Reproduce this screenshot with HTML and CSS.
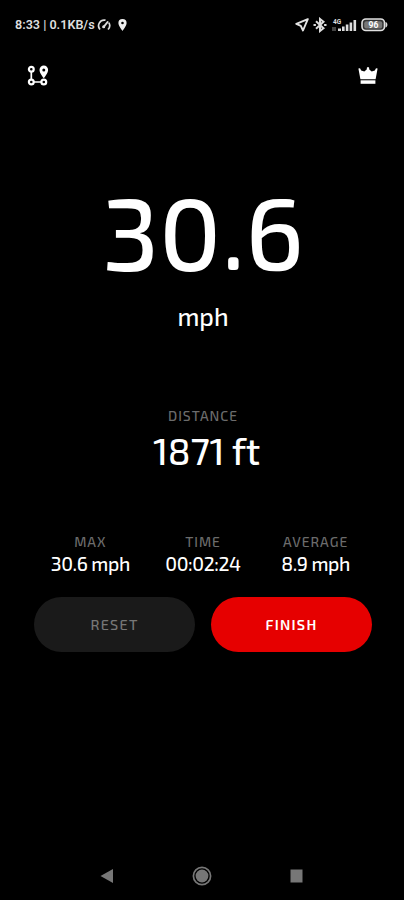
FILE: index.html
```html
<!DOCTYPE html>
<html lang="en">

<head>
  <meta charset="UTF-8">
  <meta name="viewport" content="width=device-width, initial-scale=1.0">
  <title>Speedometer</title>
  <link rel="stylesheet" href="styles.css">
</head>

<body>
  <div class="status-bar">
    <div class="status-left">
      <span class="status-text">8:33 | 0.1KB/s</span>
      <svg class="icon-gauge" width="14" height="12" viewBox="0 0 14 12" fill="none" stroke="#ddd" stroke-width="1.7">
        <path d="M3 10.5A5.7 5.7 0 0 1 8.5 1.2M11.8 3.6A5.7 5.7 0 0 1 11 10.5" />
        <path d="M6.6 8L10.6 3" stroke-width="2" stroke-linecap="round" />
        <circle cx="6.7" cy="7.7" r="1.5" fill="#ddd" stroke="none" />
      </svg>
      <svg class="icon-pin" width="9" height="12" viewBox="0 0 9 12">
        <path fill="#eee" fill-rule="evenodd" d="M4.5 0A4.1 4.1 0 0 0 .4 4.1C.4 7 4.5 12 4.5 12S8.6 7 8.6 4.1A4.1 4.1 0 0 0 4.5 0zM4.5 2.7a1.3 1.3 0 1 1 0 2.6 1.3 1.3 0 0 1 0-2.6z" />
      </svg>
    </div>
    <div class="status-right">
      <svg width="14" height="14" viewBox="0 0 14 14" fill="none" stroke="#e4e4e4" stroke-width="1.9" stroke-linejoin="round">
        <path d="M12.8 1.2L1.3 5.8L5.8 7.8L8 12.5z" />
      </svg>
      <svg class="icon-bluetooth" width="14" height="16" viewBox="0 0 14 16" fill="none" stroke="#ddd" stroke-width="2">
        <path d="M3 4.2L10.5 11.2L7 14V2L10.5 4.8L3 11.8" />
        <path d="M.5 8h2.4M11.1 8h2.4" stroke-width="2.2" />
      </svg>
      <svg class="icon-signal" width="25" height="14" viewBox="0 0 25 14" fill="#ddd">
        <text x="1" y="5.5" class="signal-text">4G</text>
        <rect x="0" y="9" width="4" height="4" fill="#444" />
        <rect x="6" y="10.5" width="3" height="2.5" />
        <rect x="10" y="8.5" width="2.6" height="4.5" />
        <rect x="13.8" y="6.5" width="2.6" height="6.5" />
        <rect x="17.6" y="4.5" width="2.6" height="8.5" />
        <rect x="21.5" y="2" width="2.6" height="11" />
      </svg>
      <svg width="27" height="14" viewBox="0 0 27 14">
        <rect x="1" y="1" width="22.5" height="11.5" rx="3.8" fill="#333" stroke="#e0e0e0" stroke-width="1.6" />
        <rect x="3.2" y="3.2" width="18" height="7.2" rx="2" fill="#777" />
        <path d="M24.5 4C27 4.5 27 9 24.5 9.5z" fill="#ddd" />
        <text x="12.5" y="10" text-anchor="middle" class="battery-text">96</text>
      </svg>
    </div>
  </div>

  <header>
    <svg width="22" height="22" viewBox="0 0 22 22" fill="none" stroke="#fff" stroke-width="2.2">
      <circle cx="4.3" cy="4.3" r="2.4" />
      <circle cx="4.3" cy="17" r="2.4" />
      <circle cx="16.8" cy="17" r="2.4" />
      <path d="M4.3 6.7v7.9M6.7 17h7.7" stroke-width="1.7" />
      <path fill="#fff" fill-rule="evenodd" stroke="none" d="M16.8 .6a4.3 4.3 0 0 0-4.3 4.3c0 3.2 4.3 8.3 4.3 8.3s4.3-5.1 4.3-8.3A4.3 4.3 0 0 0 16.8 .6zM16.8 3.4a1.5 1.5 0 1 1 0 3 1.5 1.5 0 0 1 0-3z" />
    </svg>
    <svg width="20" height="19" viewBox="0 0 20 19" fill="#fff">
      <path d="M2.4 13.2L.4 2.6L2 2.2L3.2 4.6L6.3 5.6L8.7 3.4L9 1.2H11L11.3 3.4L13.7 5.6L16.8 4.6L18 2.2L19.6 2.6L17.6 13.2z" />
      <path d="M2.6 14.3h14.8v3.5H2.6z" />
    </svg>
  </header>

  <main>
    <div class="speed">
      <div class="speed-value">30.6</div>
      <div class="speed-unit">mph</div>
    </div>

    <div class="distance">
      <div class="label">DISTANCE</div>
      <div class="distance-value">1871 ft</div>
    </div>

    <div class="stats">
      <div class="stat">
        <div class="label">MAX</div>
        <div class="stat-value">30.6 mph</div>
      </div>
      <div class="stat">
        <div class="label">TIME</div>
        <div class="stat-value">00:02:24</div>
      </div>
      <div class="stat">
        <div class="label">AVERAGE</div>
        <div class="stat-value">8.9 mph</div>
      </div>
    </div>

    <div class="buttons">
      <button type="button" class="reset">RESET</button>
      <button type="button" class="finish">FINISH</button>
    </div>
  </main>

  <nav>
    <svg width="14" height="16" viewBox="0 0 14 16" fill="#777">
      <path d="M.5 8L13 1v14z" />
    </svg>
    <svg width="20" height="20" viewBox="0 0 20 20">
      <circle cx="10" cy="10" r="8.6" fill="none" stroke="#777" stroke-width="1.7" />
      <circle cx="10" cy="10" r="6.4" fill="#777" />
    </svg>
    <svg width="13" height="14" viewBox="0 0 13 14" fill="#777">
      <rect x=".5" y=".5" width="12" height="13" />
    </svg>
  </nav>
</body>

</html>
```

FILE: styles.css
```css
* {
  box-sizing: border-box;
  margin: 0;
  padding: 0;
}

body {
  display: flex;
  flex-direction: column;
  height: 900px;
  background-color: #000000;
  color: #ffffff;
  font-family: "Exo 2", "Noto Sans", sans-serif;
  overflow: hidden;
}

svg {
  display: block;
  flex: none;
}

.status-bar {
  display: flex;
  justify-content: space-between;
  align-items: center;
  height: 49px;
  padding: 0 16px 0 15px;
}

.status-left,
.status-right {
  display: flex;
  align-items: center;
}

.status-text {
  width: 81px;
  font-family: Roboto, sans-serif;
  font-size: 12.6px;
  font-weight: 600;
  color: #dddddd;
  white-space: nowrap;
}

.icon-gauge {
  margin-left: 1px;
}

.icon-pin {
  margin-left: 7px;
}

.icon-bluetooth {
  margin: 0 5px 0 4px;
}

.icon-signal {
  margin-right: 4px;
}

.signal-text {
  font-family: Roboto, sans-serif;
  font-size: 6.5px;
  font-weight: 700;
}

.battery-text {
  font-family: Roboto, sans-serif;
  font-size: 8.5px;
  font-weight: 700;
  fill: #ffffff;
}

header {
  display: flex;
  justify-content: space-between;
  align-items: center;
  height: 53px;
  padding: 0 26px 0 27px;
}

main {
  flex: 1;
  padding: 0 32px 0 34px;
  text-align: center;
}

.speed {
  padding-top: 78px;
}

.speed-value {
  height: 120px;
  font-size: 102.5px;
  font-weight: 500;
  line-height: 100px;
}

.speed-unit {
  font-size: 25px;
  font-weight: 500;
  line-height: 32px;
}

.distance {
  margin-top: 74px;
}

.label {
  font-size: 13.8px;
  font-weight: 500;
  line-height: 19px;
  letter-spacing: 1px;
  color: #6c6c6c;
}

.distance-value {
  margin-top: 3px;
  padding-left: 7px;
  font-size: 37.5px;
  font-weight: 500;
  line-height: 46px;
  letter-spacing: -0.3px;
}

.stats {
  display: grid;
  grid-template-columns: repeat(3, 1fr);
  margin-top: 58px;
}

.stat-value {
  margin-top: 1px;
  font-size: 19.4px;
  font-weight: 500;
  line-height: 24px;
  letter-spacing: -0.4px;
}

.buttons {
  display: grid;
  grid-template-columns: 1fr 1fr;
  gap: 16px;
  margin-top: 21px;
}

button {
  height: 55px;
  border: none;
  border-radius: 28px;
  font-family: inherit;
  font-size: 14.4px;
  letter-spacing: 1.3px;
  cursor: pointer;
}

.reset {
  background-color: #1a1a1a;
  color: #777777;
  font-weight: 500;
}

.finish {
  background-color: #e60000;
  color: #ffffff;
  font-weight: 600;
}

nav {
  display: flex;
  justify-content: space-between;
  align-items: center;
  height: 48px;
  padding: 0 101px 0 100px;
}
```
